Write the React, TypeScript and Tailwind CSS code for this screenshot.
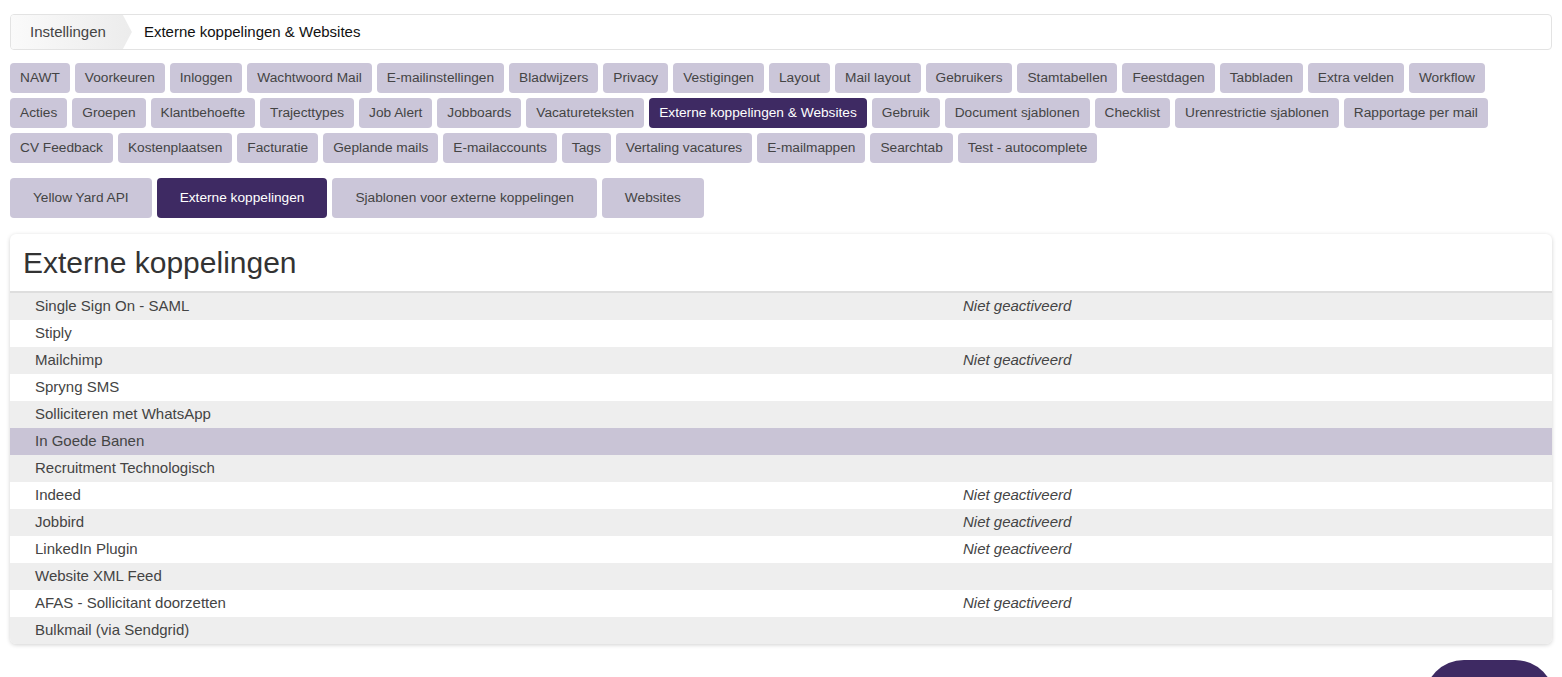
import React from 'react';

const tabs: string[][] = [
  ['NAWT', 'Voorkeuren', 'Inloggen', 'Wachtwoord Mail', 'E-mailinstellingen', 'Bladwijzers', 'Privacy', 'Vestigingen', 'Layout', 'Mail layout', 'Gebruikers', 'Stamtabellen', 'Feestdagen', 'Tabbladen', 'Extra velden', 'Workflow'],
  ['Acties', 'Groepen', 'Klantbehoefte', 'Trajecttypes', 'Job Alert', 'Jobboards', 'Vacatureteksten', 'Externe koppelingen & Websites', 'Gebruik', 'Document sjablonen', 'Checklist', 'Urenrestrictie sjablonen', 'Rapportage per mail'],
  ['CV Feedback', 'Kostenplaatsen', 'Facturatie', 'Geplande mails', 'E-mailaccounts', 'Tags', 'Vertaling vacatures', 'E-mailmappen', 'Searchtab', 'Test - autocomplete'],
];

const subTabs = ['Yellow Yard API', 'Externe koppelingen', 'Sjablonen voor externe koppelingen', 'Websites'];

const rows: { name: string; status?: string }[] = [
  { name: 'Single Sign On - SAML', status: 'Niet geactiveerd' },
  { name: 'Stiply' },
  { name: 'Mailchimp', status: 'Niet geactiveerd' },
  { name: 'Spryng SMS' },
  { name: 'Solliciteren met WhatsApp' },
  { name: 'In Goede Banen' },
  { name: 'Recruitment Technologisch' },
  { name: 'Indeed', status: 'Niet geactiveerd' },
  { name: 'Jobbird', status: 'Niet geactiveerd' },
  { name: 'LinkedIn Plugin', status: 'Niet geactiveerd' },
  { name: 'Website XML Feed' },
  { name: 'AFAS - Sollicitant doorzetten', status: 'Niet geactiveerd' },
  { name: 'Bulkmail (via Sendgrid)' },
];

const App = () => {
  return (
    <div className="min-h-screen bg-white px-[10px] pt-[14px] font-['Liberation_Sans',Arial,sans-serif] text-[14px] text-[#444]">
      {/* Breadcrumb */}
      <div className="flex h-[36px] items-stretch overflow-hidden rounded-[4px] border border-[#e3e3e3] text-[15px]">
        <div className="flex items-center bg-gradient-to-r from-[#fafafa] to-[#ececec] pl-[19px] pr-[26px] text-[#444] [clip-path:polygon(0_0,calc(100%-9px)_0,100%_50%,calc(100%-9px)_100%,0_100%)]">
          Instellingen
        </div>
        <div className="flex items-center pl-[12px] text-[#111]">Externe koppelingen &amp; Websites</div>
      </div>

      {/* Settings tabs */}
      <div className="mt-[13px] flex flex-col gap-[5px] text-[13.7px]">
        {tabs.map((row, i) => (
          <div key={i} className="flex gap-[5px]">
            {row.map((t) => {
              const active = t === 'Externe koppelingen & Websites';
              return (
                <div
                  key={t}
                  className={
                    active
                      ? 'flex h-[30px] items-center rounded-[4px] bg-[#3e2a63] px-[10px] text-white'
                      : 'flex h-[30px] items-center rounded-[4px] bg-[#cbc6d9] px-[10px] text-[#444]'
                  }
                >
                  {t}
                </div>
              );
            })}
          </div>
        ))}
      </div>

      {/* Sub tabs */}
      <div className="mt-[15px] flex gap-[5px] text-[13.7px]">
        {subTabs.map((t) => {
          const active = t === 'Externe koppelingen';
          return (
            <div
              key={t}
              className={
                active
                  ? 'flex h-[40px] items-center rounded-[4px] bg-[#3e2a63] px-[23px] text-white'
                  : 'flex h-[40px] items-center rounded-[4px] bg-[#cbc6d9] px-[23px] text-[#444]'
              }
            >
              {t}
            </div>
          );
        })}
      </div>

      {/* Card */}
      <div className="mt-[16px] overflow-hidden rounded-[6px] bg-white shadow-[0_1px_4px_rgba(0,0,0,0.18)]">
        <div className="flex h-[59px] items-center border-b-2 border-[#dedede] px-[13px] text-[30px] text-[#333]">
          Externe koppelingen
        </div>
        <div className="text-[15px]">
          {rows.map((r, i) => {
            const bg = i === 5 ? 'bg-[#c9c4d6]' : i % 2 === 0 ? 'bg-[#eeeeee]' : 'bg-white';
            return (
              <div key={r.name} className={`grid h-[27px] grid-cols-[928px_1fr] items-center ${bg}`}>
                <div className="pl-[25px] text-[#444]">{r.name}</div>
                <div className="pl-[25px] italic text-[#444]">{r.status}</div>
              </div>
            );
          })}
        </div>
      </div>

      {/* Floating button */}
      <div className="mt-[16px] -mr-[3px] flex justify-end">
        <div className="h-[40px] w-[131px] rounded-t-full bg-[#3e2a63]" />
      </div>
    </div>
  );
};

export default App;
